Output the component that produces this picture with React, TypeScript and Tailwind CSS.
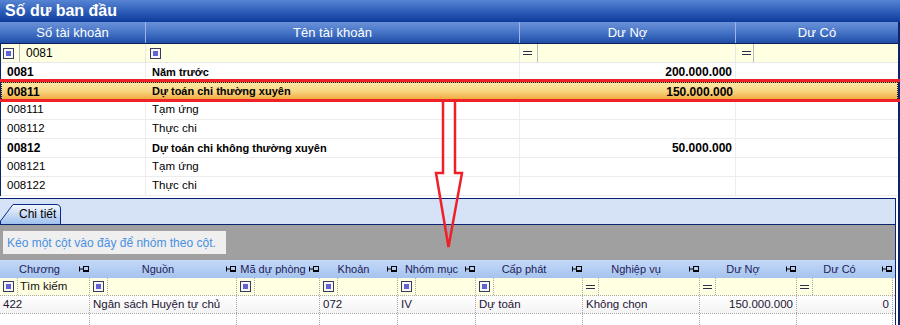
import React from "react";

function FilterBox() {
  return (
    <span className="flex h-[11px] w-[11px] shrink-0 items-center justify-center border border-[#3a3a5a] bg-[#f6f6f6]">
      <span className="block h-[5px] w-[5px] bg-[#6262d6]" />
    </span>
  );
}

function Eq() {
  return (
    <span className="flex w-[9px] shrink-0 flex-col gap-[2px]">
      <span className="block h-px w-[9px] bg-[#2c2c4c]" />
      <span className="block h-px w-[9px] bg-[#2c2c4c]" />
    </span>
  );
}

function Pin() {
  return (
    <svg width="10" height="8" viewBox="0 0 10 8" className="shrink-0">
      <path d="M0.5 1.5v5M0.5 4h3.5" stroke="#000" strokeWidth="1" fill="none" />
      <rect x="4.5" y="1.5" width="5" height="4" stroke="#000" strokeWidth="1" fill="none" />
      <path d="M4 6.5h6" stroke="#000" strokeWidth="1" />
    </svg>
  );
}

type TopRow = { code: string; name: string; no?: string; bold?: boolean; selected?: boolean };

const topRows: TopRow[] = [
  { code: "0081", name: "Năm trước", no: "200.000.000", bold: true },
  { code: "00811", name: "Dự toán chi thường xuyên", no: "150.000.000", bold: true, selected: true },
  { code: "008111", name: "Tạm ứng" },
  { code: "008112", name: "Thực chi" },
  { code: "00812", name: "Dự toán chi không thường xuyên", no: "50.000.000", bold: true },
  { code: "008121", name: "Tạm ứng" },
  { code: "008122", name: "Thực chi" },
];

type Col = { label: string; w: number; filter: "box" | "eq"; value: string; right?: boolean; search?: string };

const cols: Col[] = [
  { label: "Chương", w: 90, filter: "box", value: "422", search: "Tìm kiếm" },
  { label: "Nguồn", w: 147, filter: "box", value: "Ngân sách Huyện tự chủ" },
  { label: "Mã dự phòng", w: 83, filter: "box", value: "" },
  { label: "Khoản", w: 78, filter: "box", value: "072" },
  { label: "Nhóm mục", w: 78, filter: "box", value: "IV" },
  { label: "Cấp phát", w: 107, filter: "box", value: "Dự toán" },
  { label: "Nghiệp vụ", w: 117, filter: "eq", value: "Không chọn" },
  { label: "Dư Nợ", w: 97, filter: "eq", value: "150.000.000", right: true },
  { label: "Dư Có", w: 96, filter: "eq", value: "0", right: true },
];

export default function App() {
  return (
    <div className="relative h-[325px] w-[900px] overflow-hidden bg-white font-['Liberation_Sans',Arial,sans-serif] text-black">
      {/* Title bar */}
      <div className="flex h-[22px] items-center bg-gradient-to-b from-[#5784d2] via-[#2f5fba] to-[#0d3b9c] pl-[5px]">
        <span className="text-[16px] font-bold leading-none text-white">Số dư ban đầu</span>
      </div>

      <div className="flex h-[303px]">
        <div className="flex w-[898px] flex-col">
          {/* Top grid header */}
          <div className="flex h-[22px] border-b border-[#0b1f5c] bg-gradient-to-b from-[#6a92d8] via-[#4573c6] to-[#1f4ea7] text-[13px] text-white">
            <div className="flex w-[146px] items-center justify-center border-r border-[#9bb5e6]">Số tài khoản</div>
            <div className="flex w-[374px] items-center justify-center border-r border-[#9bb5e6]">Tên tài khoản</div>
            <div className="flex w-[216px] items-center justify-center border-r border-[#9bb5e6]">Dư Nợ</div>
            <div className="flex flex-1 items-center justify-center">Dư Có</div>
          </div>

          {/* Top grid body */}
          <div className="flex flex-col border-l border-[#0a2470]">
            {/* filter row */}
            <div className="flex h-[19px] border-b border-[#e8e8e8] bg-[#ffffe2] text-[12px]">
              <div className="flex w-[145px] items-center border-r border-[#e8e8e8]">
                <span className="ml-[2px]"><FilterBox /></span>
                <span className="ml-[5px] h-full w-px bg-[#b8b8b8]" />
                <span className="ml-[6px]">0081</span>
              </div>
              <div className="flex w-[374px] items-center border-r border-[#e8e8e8]">
                <span className="ml-[4px]"><FilterBox /></span>
              </div>
              <div className="flex w-[216px] items-center border-r border-[#e8e8e8]">
                <span className="ml-[3px]"><Eq /></span>
                <span className="ml-[5px] h-full w-px bg-[#b8b8b8]" />
              </div>
              <div className="flex flex-1 items-center">
                <span className="ml-[6px]"><Eq /></span>
                <span className="ml-[2px] h-full w-px bg-[#b8b8b8]" />
              </div>
            </div>

            {topRows.map((r) => (
              <div
                key={r.code}
                className={
                  r.selected
                    ? "flex h-[19px] border border-dotted border-[#1a1a1a] bg-gradient-to-b from-[#fdeaa6] via-[#f9d47e] to-[#efa634] text-[12px]"
                    : "flex h-[19px] border-b border-[#ececec] text-[11px]"
                }
              >
                <div
                  className={
                    (r.selected ? "w-[144px] pl-[5px]" : "w-[145px] border-r border-[#ececec] pl-[6px]") +
                    " flex items-center " +
                    (r.bold ? "text-[12px] font-bold" : "text-[11.5px]")
                  }
                >
                  {r.code}
                </div>
                <div
                  className={
                    (r.selected ? "" : "border-r border-[#ececec]") +
                    " flex w-[374px] items-center pl-[6px] " +
                    (r.bold ? "text-[11px] font-bold" : "text-[11.5px]")
                  }
                >
                  {r.name}
                </div>
                <div
                  className={
                    (r.selected ? "" : "border-r border-[#ececec]") +
                    " flex w-[216px] items-center justify-end pr-[3px] text-[12px] font-bold"
                  }
                >
                  {r.no ?? ""}
                </div>
                <div className="flex-1" />
              </div>
            ))}
          </div>

          <div className="h-[2px]" />

          {/* Bottom panel */}
          <div className="flex flex-1 flex-col">
            <div className="flex w-[896px] flex-1 flex-col border-r border-t border-[#0a2470] bg-[#d6e3f7]">
              <div className="flex h-[26px] items-end border-b border-[#0a2470]">
                <div className="relative flex h-[21px] w-[61px] items-center">
                  <svg width="61" height="21" viewBox="0 0 61 21" className="absolute inset-0">
                    <defs>
                      <linearGradient id="tabg" x1="0" y1="0" x2="0" y2="1">
                        <stop offset="0" stopColor="#f4f8fe" />
                        <stop offset="1" stopColor="#9fc1ee" />
                      </linearGradient>
                    </defs>
                    <path d="M0.5 21 L0.5 18 L13 1.5 L56 1.5 Q60.5 1.5 60.5 6 L60.5 21" fill="url(#tabg)" stroke="#0a2a8a" strokeWidth="1" />
                  </svg>
                  <span className="relative ml-[19px] mt-[1px] text-[12px] leading-none">Chi tiết</span>
                </div>
              </div>
              <div className="h-[35px] bg-[#a0a0a0] pl-[3px] pt-[6px]">
                <div className="flex h-[23px] w-[223px] items-center bg-[#efefef] pl-[4px] text-[12px] text-[#4a8fe2]">
                  Kéo một cột vào đây để nhóm theo cột.
                </div>
              </div>

              {/* bottom grid */}
              <div className="flex flex-1 flex-col bg-white">
                <div className="flex h-[18px] bg-gradient-to-b from-[#c4d9f8] to-[#a5c3ee] text-[11px] text-[#221c58]">
                  {cols.map((c) => (
                    <div key={c.label} className="flex shrink-0 items-center pr-[1px]" style={{ width: c.w }}>
                      <span className="flex-1 whitespace-nowrap text-center">{c.label}</span>
                      <Pin />
                    </div>
                  ))}
                </div>
                <div className="flex h-[18px] border-b border-dotted border-[#a8a8a8] bg-[#ffffe2] text-[11.5px]">
                  {cols.map((c) => (
                    <div
                      key={c.label}
                      className="flex shrink-0 items-center border-r border-dotted border-[#a8a8a8]"
                      style={{ width: c.w }}
                    >
                      <span className="ml-[3px]">{c.filter === "box" ? <FilterBox /> : <Eq />}</span>
                      <span className="ml-[3px] h-full border-r border-dotted border-[#a8a8a8]" />
                      {c.search ? <span className="ml-[2px] text-[#111]">{c.search}</span> : null}
                    </div>
                  ))}
                </div>
                <div className="flex h-[18px] border-b border-dotted border-[#a8a8a8] bg-gradient-to-b from-white to-[#f3f3f3] text-[11.5px] text-[#241434]">
                  {cols.map((c) => (
                    <div
                      key={c.label}
                      className={
                        "flex shrink-0 items-center whitespace-nowrap border-r border-dotted border-[#a8a8a8] " +
                        (c.right ? "justify-end pr-[3px]" : "pl-[3px]")
                      }
                      style={{ width: c.w }}
                    >
                      {c.value}
                    </div>
                  ))}
                </div>
                <div className="flex flex-1">
                  {cols.map((c) => (
                    <div key={c.label} className="shrink-0 border-r border-dotted border-[#a8a8a8]" style={{ width: c.w }} />
                  ))}
                </div>
              </div>
            </div>
          </div>
        </div>
        <div className="w-[2px] bg-[#0a2470]" />
      </div>

      {/* annotation overlay */}
      <svg width="900" height="325" viewBox="0 0 900 325" className="pointer-events-none absolute left-0 top-0">
        <path d="M0 80.5 H900" stroke="#ee2028" strokeWidth="3" />
        <path d="M0 100.5 H900" stroke="#ee2028" strokeWidth="3" />
        <path
          d="M443 102 L443 173 L436 173 L448.5 247 L462 173 L455 173 L455 102"
          fill="none"
          stroke="#ee2028"
          strokeWidth="2.5"
          strokeLinejoin="miter"
        />
      </svg>
    </div>
  );
}
